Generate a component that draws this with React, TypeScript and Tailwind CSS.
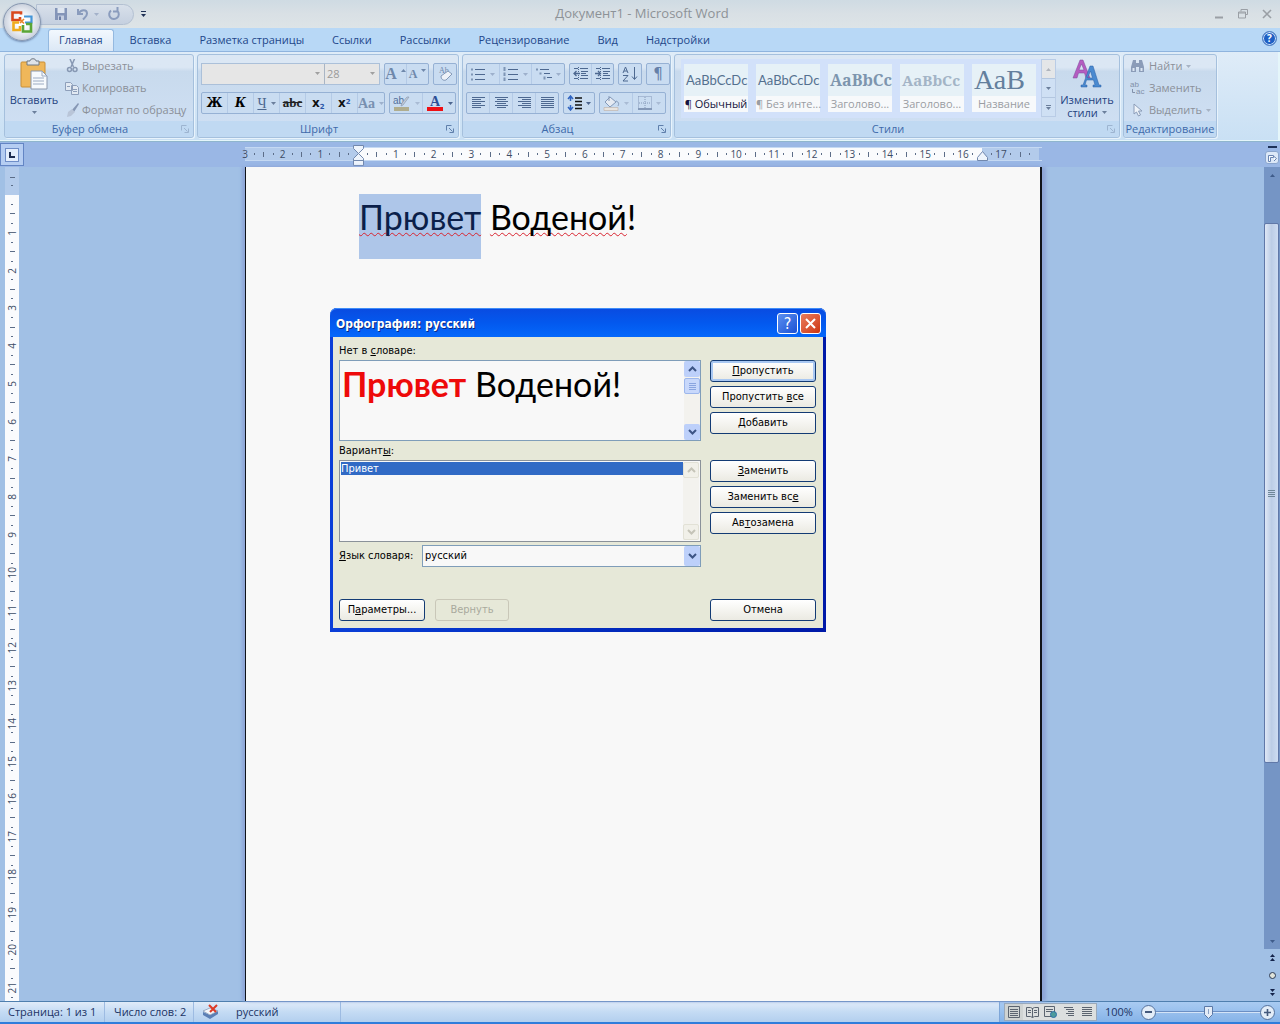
import type { ReactNode } from 'react';
import clsx from 'clsx';

const TABS = ['Главная', 'Вставка', 'Разметка страницы', 'Ссылки', 'Рассылки', 'Рецензирование', 'Вид', 'Надстройки'];

const STYLES = [
  { sample: 'AaBbCcDc', name: '¶ Обычный', cls: "font-['Lato',sans-serif] text-[13px] text-[#54708f]", active: true },
  { sample: 'AaBbCcDc', name: '¶ Без инте...', cls: "font-['Lato',sans-serif] text-[13px] text-[#54708f]" },
  { sample: 'AaBbCc', name: 'Заголово...', cls: "font-['Noto_Serif',serif] font-bold text-[16px] text-[#7d95ae]" },
  { sample: 'AaBbCc', name: 'Заголово...', cls: "font-['Noto_Serif',serif] font-bold text-[15px] text-[#a3b4c6]" },
  { sample: 'АаВ', name: 'Название', cls: "font-['Liberation_Serif',serif] text-[28px] text-[#637f9d]" },
];

/* ---------- small shared bits ---------- */

function Caret({ className = 'text-[#6b7f9c]' }: { className?: string }) {
  return (
    <svg viewBox="0 0 5 3" className={clsx('h-[3px] w-[5px] shrink-0', className)}>
      <path d="M0 0h5L2.500 3z" fill="currentColor" />
    </svg>
  );
}

function Chevron({ up, className }: { up?: boolean; className?: string }) {
  return (
    <svg viewBox="0 0 9 6" className={clsx('h-[6px] w-[9px]', className)}>
      <path d={up ? 'M1 5l3.5-3.5L8 5' : 'M1 1l3.5 3.5L8 1'} fill="none" stroke="currentColor" strokeWidth="2" />
    </svg>
  );
}

function Group({ title, launcher, muted, className, children }: { title: string; launcher?: boolean; muted?: boolean; className: string; children: ReactNode }) {
  return (
    <section className={clsx('flex shrink-0 flex-col rounded-[3px] border border-[#a5c0dd] bg-linear-to-b from-[#dbe7f4] from-15% via-[#c8daed] via-20% to-[#d0e0f4] shadow-[1px_1px_0_#e8f3fc]', className)}>
      <div className="flex min-h-0 flex-1">{children}</div>
      <div className={clsx('relative h-4 rounded-b-[3px] bg-[#c0d9f2] text-center text-[11px] leading-4 text-[#3e6aaa]', launcher && 'pr-[18px]')}>
        {title}
        {launcher && (
          <button aria-label={`${title}: параметры`} className={clsx('absolute right-1 top-1 h-2 w-2', muted ? 'text-[#9db4d0]' : 'text-[#5f7fab]')}>
            <svg viewBox="0 0 8 8" className="h-2 w-2" fill="none" stroke="currentColor">
              <path d="M.5 5.5v-5h5M3 3l3.5 3.5M7.5 3.5v4h-4" />
            </svg>
          </button>
        )}
      </div>
    </section>
  );
}

function Box({ className, children }: { className: string; children: ReactNode }) {
  return (
    <div className={clsx('flex h-[22px] items-stretch divide-x divide-[#b4cae6] rounded-[2px] border border-[#96b1d4] bg-[#c9dcf1] text-[#4d6890]', className)}>
      {children}
    </div>
  );
}

function Tool({ label, caret, caretClass, children }: { label: string; caret?: boolean; caretClass?: string; children: ReactNode }) {
  return (
    <button aria-label={label} className="flex flex-1 items-center justify-center gap-1">
      {children}
      {caret && <Caret className={caretClass} />}
    </button>
  );
}

function Lines({ rows }: { rows: [number, number][] }) {
  return (
    <svg viewBox="0 0 15 14" className="h-[14px] w-[15px]" stroke="currentColor" strokeWidth="1">
      {rows.map(([a, b], i) => <path key={i} d={`M${a} ${1.5 + i * 2}H${b}`} />)}
    </svg>
  );
}

function ListIcon({ kind }: { kind: 'dot' | 'num' | 'multi' }) {
  return (
    <svg viewBox="0 0 16 14" className="h-[14px] w-4" fill="none" stroke="currentColor">
      {kind === 'multi' ? (
        <>
          <path d="M4 2.500h9M8 6.500h6M11 10.500h5" />
          <path d="M1 1.500v2M4.500 5.500v2M8.500 9.500v3" strokeWidth="2" opacity=".6" />
        </>
      ) : (
        <>
          <path d="M5 2.500h10M5 7.500h10M5 12.500h10" />
          <path d={kind === 'dot' ? 'M1 2.500h2M1 7.500h2M1 12.500h2' : 'M1.500 0v4M1.500 5.500v3.500M1.500 10.500v3.500'} strokeWidth="2" opacity=".6" />
        </>
      )}
    </svg>
  );
}

function IndentIcon({ right }: { right?: boolean }) {
  return (
    <svg viewBox="0 0 16 14" className="h-[14px] w-4" fill="none" stroke="currentColor">
      <path d="M1 1.500h4M7 1.500h8M8 4.500h7M8 6.500h5M8 8.500h7M1 11.500h4M7 11.500h8" />
      <path d="M5.500 0v14" strokeDasharray="1 1" />
      <path d={right ? 'M0 6.500h5M3 4l2.500 2.500L3 9' : 'M1 6.500h6M3.500 4L1 6.500 3.500 9'} strokeWidth="1.300" />
    </svg>
  );
}

/* ---------- title bar ---------- */

function OfficeButton() {
  return (
    <button aria-label="Кнопка Office" className="absolute left-[3px] top-[3px] z-10 flex h-[38px] w-[38px] items-center justify-center rounded-full border border-[#8797b0] bg-radial from-white from-20% via-[#e3e7ee] to-[#a9b4c6] shadow-[0_1px_2px_#6d87ad]">
      <svg viewBox="0 0 24 24" className="h-6 w-6" fill="none" strokeWidth="2.600">
        <path d="M11 4.500V2.500H2.500V10H10V7" stroke="#d9481c" />
        <path d="M14 6.500h7.500v6H15" stroke="#4596d8" strokeWidth="2.200" />
        <path d="M9 12.500H3.500v7.500H10v-4" stroke="#efac1c" />
        <path d="M13 15v6.500h8V14h-5" stroke="#5aa636" />
        <path d="M10 9.500l4 4M14 9l-4 4" stroke="#e8842a" strokeWidth="1.600" />
      </svg>
    </button>
  );
}

function TitleBar() {
  return (
    <header className="flex h-7 items-center bg-linear-to-b from-[#cfdbe3] via-[#d9e0e5] to-[#dde4e7]">
      <div className="flex flex-1 items-center pl-3">
        <div className="ml-6 flex h-[21px] w-[98px] items-center gap-2 rounded-r-full border border-[#b3c0d2] bg-linear-to-b from-[#d8e0ea] to-[#c5d0e0] pl-[17px] text-[#8a9cbd]">
          <button aria-label="Сохранить">
            <svg viewBox="0 0 14 14" className="h-[14px] w-[14px]">
              <path d="M1 1h12v12H1z" fill="#8495b8" />
              <path d="M3.500 1h7v5h-7z" fill="#dfe6f0" />
              <path d="M4 8.500h6V13H4z" fill="#c3cde0" />
              <path d="M5 9.500h2V13H5z" fill="#6d7fa6" />
            </svg>
          </button>
          <button aria-label="Отменить" className="flex items-center gap-1">
            <svg viewBox="0 0 14 14" className="h-[14px] w-[14px]" fill="none" stroke="currentColor" strokeWidth="2">
              <path d="M2 2v5h5M2.500 6.500C5 2 11 2 11 6.500c0 3-2 4-4 6" />
            </svg>
            <Caret className="text-[#a3b1c9]" />
          </button>
          <button aria-label="Повторить">
            <svg viewBox="0 0 14 14" className="h-[14px] w-[14px]" fill="none" stroke="currentColor" strokeWidth="2">
              <path d="M4 3.500a4.800 4.800 0 1 0 6.500.5M10.500 0v4.500H6" />
            </svg>
          </button>
        </div>
        <button aria-label="Настройка панели быстрого доступа" className="ml-[7px] flex flex-col items-center gap-[2px] text-[#1f3055]">
          <span className="h-px w-[5px] bg-current" />
          <Caret className="text-[#1f3055]" />
        </button>
      </div>
      <h1 className="text-[13px] text-[#8d9297]">Документ1 - Microsoft Word</h1>
      <div className="flex flex-1 items-center justify-end gap-[14px] pr-2 text-[#9a9fa5]">
        <button aria-label="Свернуть"><svg viewBox="0 0 10 10" className="h-[10px] w-[10px]"><path d="M1 8.500h8" stroke="currentColor" strokeWidth="2" /></svg></button>
        <button aria-label="Развернуть">
          <svg viewBox="0 0 10 10" className="h-[10px] w-[10px]" fill="none" stroke="currentColor"><path d="M3 2.500v-2h6.500v5h-2M.5 3h7v6h-7zM.5 4h7" /></svg>
        </button>
        <button aria-label="Закрыть"><svg viewBox="0 0 10 10" className="h-[10px] w-[10px]"><path d="M1 1l8 8M9 1L1 9" stroke="currentColor" strokeWidth="1.600" /></svg></button>
      </div>
    </header>
  );
}

function TabRow() {
  return (
    <nav className="flex h-[23px] items-end gap-1 bg-[#b8d8f6] pl-12 pr-[3px] text-[11px] text-[#22478a]">
      {TABS.map((t, i) => (
        <button
          key={t}
          className={clsx('h-[22px]', i === 0 ? 'rounded-t-[3px] border border-b-0 border-[#94b9e0] bg-linear-to-b from-[#f2f8fe] to-[#dce8f5] px-[10px]' : 'px-3')}
        >
          {t}
        </button>
      ))}
      <button aria-label="Справка" className="mb-[5px] ml-auto flex h-[15px] w-[15px] items-center justify-center rounded-full border border-[#5583c4] bg-[#1f5fc4] text-[10px] font-bold text-white shadow-[inset_0_0_0_1px_#d4e5fa]">
        ?
      </button>
    </nav>
  );
}

/* ---------- ribbon ---------- */

function ClipboardGroup() {
  const row = 'flex h-[22px] items-center gap-[3px] whitespace-nowrap';
  return (
    <Group title="Буфер обмена" launcher muted className="w-[190px]">
      <button className="flex w-[58px] flex-col items-center pt-[3px] text-[11px] leading-4 text-[#1f4380]">
        <svg viewBox="0 0 30 32" className="mb-[2px] h-8 w-[30px]">
          <rect x="2" y="4" width="24" height="25" rx="1" fill="#efb75a" stroke="#c98f36" />
          <path d="M8 7V3h3c0-3 6-3 6 0h3v4z" fill="#dfe3e8" stroke="#6f7883" />
          <path d="M12 13h11l5 5v13H12z" fill="#f7fafd" stroke="#8b98ad" />
          <path d="M23 13v5h5M14 20h11M14 23h11M14 26h11" stroke="#9cabc2" fill="none" />
        </svg>
        Вставить
        <Caret className="mt-[3px] text-[#6b7f9c]" />
      </button>
      <div className="flex flex-col pl-[2px] text-[11px] text-[#8b9099]">
        <button className={row}>
          <svg viewBox="0 0 14 14" className="h-[14px] w-[14px]" fill="none" stroke="#8798b3" strokeWidth="1.500">
            <path d="M5 0l3.500 8M9.500 0L6 8" /><circle cx="4.500" cy="10.500" r="2" /><circle cx="10" cy="10.500" r="2" />
          </svg>
          Вырезать
        </button>
        <button className={row}>
          <svg viewBox="0 0 14 14" className="h-[14px] w-[14px]" fill="#e2e9f2" stroke="#8e9fba">
            <path d="M.5 1.500h5l2 2v6h-7zM6.500 4.500h5l2 2v7h-7z" /><path d="M2 5.500h3M8 8.500h4M8 10.500h4" />
          </svg>
          Копировать
        </button>
        <button className={row}>
          <svg viewBox="0 0 14 14" className="h-[14px] w-[14px]">
            <path d="M13 0l1 1-5 8-2-2z" fill="#8697b4" /><path d="M7 6l3 3-4 4-4 1 1-5z" fill="#b9c5d8" />
          </svg>
          Формат по образцу
        </button>
      </div>
    </Group>
  );
}

function FontGroup() {
  const combo = 'block h-full w-full appearance-none bg-[#e6e6e6] pl-[2px] text-[11px] leading-5 text-[#9a9a9a]';
  return (
    <Group title="Шрифт" launcher className="w-[262px]">
      <div className="flex flex-1 flex-col gap-[7px] pl-[3px] pt-2">
        <div className="flex gap-1">
          <div className="flex h-[22px] w-[179px] divide-x divide-[#a9b5c4] border border-[#abc0d9]">
            <label className="relative w-[123px]">
              <select aria-label="Шрифт" className={combo}><option></option></select>
              <Caret className="absolute right-1 top-2 text-[#a0a0a0]" />
            </label>
            <label className="relative flex-1">
              <select aria-label="Размер шрифта" className={combo}><option>28</option></select>
              <Caret className="absolute right-1 top-2 text-[#a0a0a0]" />
            </label>
          </div>
          <Box className="w-[45px] font-['Liberation_Serif',serif] font-bold text-[#6f88ab]">
            <Tool label="Увеличить размер"><span className="text-[16px] leading-4">A</span><Caret className="mb-2 rotate-180" /></Tool>
            <Tool label="Уменьшить размер"><span className="text-[12px] leading-4">A</span><Caret className="mb-2" /></Tool>
          </Box>
          <Box className="w-6">
            <Tool label="Очистить формат">
              <svg viewBox="0 0 18 18" className="h-[18px] w-[18px]">
                <text x="3" y="8" fontSize="8" fontFamily="Liberation Serif, serif" fill="#6f88ab">Аb</text>
                <path d="M5 11l7-5 4 3-6 6c-3 1-5-1-5-4z" fill="#eef2f8" stroke="#8399b8" />
              </svg>
            </Tool>
          </Box>
        </div>
        <div className="flex gap-1 font-['Liberation_Serif',serif]">
          <Box className="w-[184px] text-[14px]">
            <Tool label="Полужирный"><b className="font-['DejaVu_Serif',serif] text-[12px] text-black">Ж</b></Tool>
            <Tool label="Курсив"><b className="font-['DejaVu_Serif',serif] text-[12px] italic text-black">К</b></Tool>
            <Tool label="Подчеркнутый" caret><span className="text-[14px] underline">Ч</span></Tool>
            <Tool label="Зачеркнутый"><b className="text-[13px] text-[#222] line-through">abc</b></Tool>
            <Tool label="Подстрочный"><b className="font-['DejaVu_Sans',sans-serif] text-[12px] text-[#111]">x<sub className="text-[7px] text-[#2a56a8]">2</sub></b></Tool>
            <Tool label="Надстрочный"><b className="font-['DejaVu_Sans',sans-serif] text-[12px] text-[#111]">x<sup className="text-[7px] text-[#2a56a8]">2</sup></b></Tool>
            <Tool label="Регистр" caret caretClass="text-[#9db0cc]"><span className="font-bold text-[#7890b0]">Aa</span></Tool>
          </Box>
          <Box className="w-[67px]">
            <Tool label="Цвет выделения" caret caretClass="text-[#a9bbd4]">
              <svg viewBox="0 0 18 18" className="h-[18px] w-[18px]">
                <text x="0" y="10" fontSize="10" fontFamily="Liberation Sans, sans-serif" fill="#54719c">ab</text>
                <path d="M16 3l-6 8-2 1 1-3 5-6z" fill="#c3cbd6" stroke="#8b9bb2" strokeWidth=".7" />
                <path d="M1 13h15v4H1z" fill="#b0ad8e" />
              </svg>
            </Tool>
            <Tool label="Цвет текста" caret caretClass="text-[#4c658f]">
              <svg viewBox="0 0 18 18" className="h-[18px] w-[18px]">
                <text x="4" y="12" fontSize="14" fontWeight="bold" fontFamily="Liberation Serif, serif" fill="#2d4f96">A</text>
                <path d="M1 13h16v4H1z" fill="#ee0f14" />
              </svg>
            </Tool>
          </Box>
        </div>
      </div>
    </Group>
  );
}

function ParagraphGroup() {
  return (
    <Group title="Абзац" launcher className="w-[209px]">
      <div className="flex flex-1 flex-col gap-[7px] pl-[3px] pt-2">
        <div className="flex gap-1">
          <Box className="w-[99px]">
            <Tool label="Маркеры" caret caretClass="text-[#9db0cc]"><ListIcon kind="dot" /></Tool>
            <Tool label="Нумерация" caret caretClass="text-[#9db0cc]"><ListIcon kind="num" /></Tool>
            <Tool label="Многоуровневый список" caret caretClass="text-[#9db0cc]"><ListIcon kind="multi" /></Tool>
          </Box>
          <Box className="w-[45px]">
            <Tool label="Уменьшить отступ"><IndentIcon /></Tool>
            <Tool label="Увеличить отступ"><IndentIcon right /></Tool>
          </Box>
          <Box className="w-6">
            <Tool label="Сортировка">
              <svg viewBox="0 0 16 16" className="h-4 w-4" fill="none" stroke="currentColor">
                <path d="M1 7l2.500-6L6 7M2 5h3M1 9.500h5l-5 5.500h5M12.500 1v12M10 10.500l2.500 3 2.500-3" />
              </svg>
            </Tool>
          </Box>
          <Box className="w-6">
            <Tool label="Непечатаемые знаки"><span className="font-['DejaVu_Sans',sans-serif] text-[15px] text-[#6580a8]">¶</span></Tool>
          </Box>
        </div>
        <div className="flex gap-1">
          <Box className="w-[93px]">
            <Tool label="По левому краю"><Lines rows={[[1, 14], [1, 10], [1, 14], [1, 10], [1, 14], [1, 10]]} /></Tool>
            <Tool label="По центру"><Lines rows={[[1, 14], [3, 12], [1, 14], [3, 12], [1, 14], [3, 12]]} /></Tool>
            <Tool label="По правому краю"><Lines rows={[[1, 14], [5, 14], [1, 14], [5, 14], [1, 14], [5, 14]]} /></Tool>
            <Tool label="По ширине"><Lines rows={[[1, 14], [1, 14], [1, 14], [1, 14], [1, 14], [1, 14]]} /></Tool>
          </Box>
          <Box className="w-8">
            <Tool label="Междустрочный интервал" caret caretClass="text-[#4c658f]">
              <svg viewBox="0 0 15 16" className="h-4 w-[15px]" fill="none">
                <path d="M3.500 1v5M3.500 10v5M1 4l2.500-3L6 4M1 12l2.500 3L6 12" stroke="#2f63c0" strokeWidth="1.500" />
                <path d="M8 3h7M8 6.500h7M8 10h7M8 13.500h7" stroke="#111" strokeWidth="1.500" />
              </svg>
            </Tool>
          </Box>
          <Box className="w-[67px]">
            <Tool label="Заливка" caret caretClass="text-[#a9bbd4]">
              <svg viewBox="0 0 17 16" className="h-4 w-[17px]">
                <path d="M7 2l6 5-6 5-5-5z" fill="#e5eaf2" stroke="#8499b8" /><path d="M6 6V1M13 6c3 1 3 3 2 5" stroke="#8499b8" fill="none" />
                <path d="M1 12.500h14v3H1z" fill="#e8e4df" stroke="#c0b4ae" strokeWidth=".7" />
              </svg>
            </Tool>
            <Tool label="Границы" caret caretClass="text-[#a9bbd4]">
              <svg viewBox="0 0 14 14" className="h-[14px] w-[14px]" fill="none" stroke="#8499b8">
                <path d="M.5.5h13v13M.5.5v13M7 1v12M1 7h12" strokeDasharray="1 1" /><path d="M0 13h14" strokeWidth="2" />
              </svg>
            </Tool>
          </Box>
        </div>
      </div>
    </Group>
  );
}

function StylesGroup() {
  return (
    <Group title="Стили" launcher muted className="w-[446px]">
      <div className="ml-[6px] mt-1 flex h-[59px] w-[360px] gap-2 bg-[#d2e1fa] pl-[3px] pt-[5px]">
        {STYLES.map((s, i) => (
          <button key={i} className="flex h-12 w-16 shrink-0 flex-col bg-[#f7f9fb]">
            <span className={clsx('block h-8 w-full bg-[#e6f1f7] px-[2px] text-left leading-8 whitespace-nowrap', s.cls)}>{s.sample}</span>
            <span className={clsx('w-full text-center text-[11px] leading-4 whitespace-nowrap', s.active ? 'text-[#151540]' : 'text-[#9a9da3]')}>{s.name}</span>
          </button>
        ))}
      </div>
      <div className="mt-1 flex h-[58px] w-[15px] flex-col divide-y divide-[#b3c6df] border border-[#b9cce6] bg-[#cfe0f4]">
        <button aria-label="Вверх" className="flex flex-1 items-center justify-center bg-[#e4e6e8]"><Caret className="rotate-180 text-[#b0b5bd]" /></button>
        <button aria-label="Вниз" className="flex flex-1 items-center justify-center"><Caret /></button>
        <button aria-label="Дополнительно" className="flex flex-1 flex-col items-center justify-center gap-px"><span className="h-px w-[5px] bg-[#6b7f9c]" /><Caret /></button>
      </div>
      <button className="ml-[3px] mt-1 flex w-[56px] flex-col items-center text-[11px] leading-[13px] text-[#1f4380]">
        <svg viewBox="0 0 30 30" className="mb-1 h-[30px] w-[30px]">
          <path d="M1 19L8 1h3l7 18h-4l-1.500-5h-6L5 19zM7 11h5L9.500 5z" fill="#b45cc0" stroke="#7a4a9c" strokeWidth=".5" />
          <path d="M9 26h2l7-19h3l6 19h2v2h-8v-2h2l-1.500-5h-7L13 26h2v2H9zM15.500 19h5L18.500 12z" fill="#4a8ad0" stroke="#2a5ea4" strokeWidth=".5" />
        </svg>
        Изменить
        <span className="flex items-center gap-1">стили <Caret /></span>
      </button>
    </Group>
  );
}

function EditGroup() {
  const row = 'flex h-[22px] items-center gap-1 whitespace-nowrap';
  return (
    <Group title="Редактирование" className="w-[94px]">
      <div className="flex flex-col pl-[6px] text-[11px] text-[#8b9099]">
        <button className={row}>
          <svg viewBox="0 0 15 14" className="h-[14px] w-[15px]" fill="#8b9cb8">
            <path d="M3 1h3v3h3V1h3l2 7v5H9V8H6v5H1V8z" /><path d="M2.500 9h2v3h-2zM10.500 9h2v3h-2z" fill="#dbe5f1" />
          </svg>
          Найти <Caret className="text-[#a7b3c4]" />
        </button>
        <button className={row}>
          <svg viewBox="0 0 15 14" className="h-[14px] w-[15px]">
            <text x="0" y="6" fontSize="8" fontFamily="Liberation Sans, sans-serif" fill="#8291aa">ab</text>
            <text x="6" y="13" fontSize="8" fontFamily="Liberation Sans, sans-serif" fill="#8291aa">ac</text>
            <path d="M2.500 8v3.500H5" stroke="#8291aa" fill="none" />
          </svg>
          Заменить
        </button>
        <button className={row}>
          <svg viewBox="0 0 15 14" className="h-[14px] w-[15px]">
            <path d="M4 1v10l2.500-2 2 4 2-1-2-4H12z" fill="#eef3f9" stroke="#8b9cb8" />
          </svg>
          Выделить <Caret className="text-[#a7b3c4]" />
        </button>
      </div>
    </Group>
  );
}

function Ribbon() {
  return (
    <div className="flex h-[91px] gap-[3px] border-y border-[#8fb4de] border-b-[#8fb5cd] bg-linear-to-b from-[#dfecf8] to-[#c9e0f4] pl-1 pt-[2px] pb-[3px] shadow-[inset_-2px_-1px_0_#e5f6fa]">
      <ClipboardGroup />
      <FontGroup />
      <ParagraphGroup />
      <StylesGroup />
      <EditGroup />
    </div>
  );
}

/* ---------- rulers ---------- */

// four marks per centimetre: number, dot, dash, dot
function marks(from: number, count: number) {
  return Array.from({ length: count }, (_, i) => {
    const q = from + i;
    if (q === 0) return '';
    if (q % 4 === 0) return String(Math.abs(q / 4));
    return q % 2 === 0 ? '|' : '·';
  });
}

function Mark({ m }: { m: string }) {
  if (m === '|') return <span className="h-[5px] w-px shrink-0 bg-[#5c6d88]" />;
  if (m === '·') return <span className="h-[2px] w-px shrink-0 bg-[#5c6d88]" />;
  return <span>{m}</span>;
}

function HMarks({ from, count, className }: { from: number; count: number; className: string }) {
  return (
    <div className={clsx('flex h-3 items-center', className)}>
      {marks(from, count).map((m, i) => (
        <div key={i} className="flex h-3 flex-1 items-center">
          <div className="flex w-0 items-center justify-center"><Mark m={m} /></div>
        </div>
      ))}
    </div>
  );
}

function HRuler() {
  return (
    <div className="flex h-[25px] shrink-0 bg-[#9ab7e5]">
      <div className="flex w-[25px] items-center">
        <button aria-label="Тип табуляции" className="flex h-[23px] w-6 items-center justify-center border border-[#6385c4] bg-[#b5cdf2]">
          <span className="flex h-[14px] w-[14px] items-center justify-center border border-[#6f8ec8] bg-[#e3edfc]">
            <span className="h-[6px] w-[6px] border-b-2 border-l-2 border-[#1d2c50]" />
          </span>
        </button>
      </div>
      <div className="flex min-w-0 flex-1 justify-center pt-[5px] text-[10px] text-[#3d4d66]">
        <div className="relative flex h-[14px] w-[797px] shrink-0 border-y border-[#c5d9f3]">
          <HMarks from={-12} count={12} className="w-[113px] bg-[#b3cbeb]" />
          <HMarks from={0} count={66} className="w-[624px] bg-[#fafbfd]" />
          <HMarks from={66} count={6} className="w-[57px] bg-[#b3cbeb]" />
          <svg viewBox="0 0 11 22" className="absolute -top-[3px] left-[108px] h-[22px] w-[11px]" fill="#eef4fc" stroke="#7288ad">
            <path d="M.5.5h10v3l-5 5-5-5zM5.500 8.500l5 5v2H.5v-2zM.5 15.500h10v5H.5z" />
          </svg>
          <svg viewBox="0 0 11 10" className="absolute left-[732px] top-[3px] h-[10px] w-[11px]" fill="#eef4fc" stroke="#7288ad">
            <path d="M5.500.5l5 6v3H.5v-3z" />
          </svg>
        </div>
      </div>
      <div className="flex w-[18px] flex-col items-center gap-[3px] pl-[2px] pt-1">
        <span className="h-[2px] w-[9px] bg-[#1d3158]" />
        <button aria-label="Линейка" className="flex h-[13px] w-[14px] items-center justify-center rounded-[3px] border border-[#8aa5cd] bg-[#dce8f8]">
          <svg viewBox="0 0 9 9" className="h-[9px] w-[9px]" fill="#f8fbfe" stroke="#6a85b2"><path d="M.5 2.500h5v2h-3v4h-2zM6 3.500l2.500 2L6 8" /></svg>
        </button>
      </div>
    </div>
  );
}

function VMark({ m }: { m: string }) {
  if (m === '|') return <span className="h-px w-[5px] bg-[#5c6d88]" />;
  if (m === '·') return <span className="h-px w-[2px] bg-[#5c6d88]" />;
  return <span className="rotate-180 [writing-mode:vertical-rl]">{m}</span>;
}

function VRuler() {
  return (
    <div className="w-[25px] shrink-0 overflow-hidden pl-[5px] text-[10px] text-[#3d4d66]">
      <div className="flex h-[28px] w-[14px] flex-col items-center justify-center gap-[7px] bg-[#b3cbeb]">
        <VMark m="|" /><VMark m="·" />
      </div>
      <div className="flex h-[811px] w-[14px] flex-col bg-[#fafbfd]">
        {marks(0, 86).map((m, i) => (
          <div key={i} className="flex min-h-0 flex-1 flex-col">
            <div className="flex h-0 items-center justify-center"><VMark m={m} /></div>
          </div>
        ))}
      </div>
    </div>
  );
}

function DocScrollbar() {
  const arrow = 'flex h-4 shrink-0 items-center justify-center bg-[#7595c5]';
  return (
    <div className="flex w-[18px] shrink-0 flex-col pl-[2px]">
      <div className="flex min-h-0 flex-1 flex-col bg-[#7595c5]">
        <button aria-label="Прокрутка вверх" className={arrow}><Caret className="rotate-180 text-[#3f5c8a]" /></button>
        <div className="relative flex-1">
          <div className="absolute left-0 right-px top-10 flex h-[72%] items-center justify-center rounded-[2px] border border-[#6078a8] bg-linear-to-r from-[#dfe7f5] via-[#bccde6] to-[#cddcf2]">
            <div className="flex flex-col gap-px">
              {[0, 1, 2, 3].map(i => <span key={i} className="h-px w-[7px] bg-[#6f8798]" />)}
            </div>
          </div>
        </div>
        <button aria-label="Прокрутка вниз" className={arrow}><Caret className="text-[#3f5c8a]" /></button>
      </div>
      <div className="flex h-[52px] flex-col items-center justify-between py-[5px]">
        <button aria-label="Предыдущая страница" className="flex flex-col gap-px"><Caret className="rotate-180 text-[#14234a]" /><Caret className="rotate-180 text-[#14234a]" /></button>
        <button aria-label="Выбор объекта перехода" className="h-[7px] w-[7px] rounded-full border border-[#2c3a55] bg-[#dfe3da]" />
        <button aria-label="Следующая страница" className="flex flex-col gap-px"><Caret className="text-[#14234a]" /><Caret className="text-[#14234a]" /></button>
      </div>
    </div>
  );
}

/* ---------- spelling dialog ---------- */

function DlgButton({ disabled, focused, className, children }: { disabled?: boolean; focused?: boolean; className?: string; children: ReactNode }) {
  return (
    <button
      disabled={disabled}
      className={clsx(
        'h-[22px] rounded-[3px] border',
        disabled ? 'border-[#c9c7b8] text-[#a9aa9d]' : 'border-[#133b74] bg-linear-to-b from-white to-[#ebeae2]',
        focused && 'shadow-[inset_0_0_0_2px_#a9c8f2]',
        className,
      )}
    >
      {children}
    </button>
  );
}

function BoxScroll({ disabled }: { disabled?: boolean }) {
  const btn = clsx('flex h-4 w-full shrink-0 items-center justify-center rounded-[2px]', disabled ? 'border border-[#e2e1d6] bg-[#f1f0e9] text-[#c5c4b8]' : 'bg-[#bdd0fa] text-[#3d5585]');
  return (
    <div className="flex w-4 shrink-0 flex-col bg-[#f3f2ee]">
      <button aria-label="Вверх" className={btn}><Chevron up /></button>
      {!disabled && (
        <div className="mt-px flex h-4 flex-col items-center justify-center gap-px rounded-[2px] border border-[#9db7ec] bg-[#c8d8fb]">
          {[0, 1, 2, 3].map(i => <span key={i} className="h-px w-[7px] bg-[#8aa5e0]" />)}
        </div>
      )}
      <button aria-label="Вниз" className={clsx(btn, 'mt-auto')}><Chevron /></button>
    </div>
  );
}

function SpellingDialog() {
  return (
    <div role="dialog" aria-labelledby="dlg-title" className="absolute left-[84px] top-[141px] w-[496px] rounded-t-[7px] bg-linear-to-r from-[#0b3fd8] to-[#0019a8] px-[3px] pb-1 font-['DejaVu_Sans_Condensed','DejaVu_Sans',sans-serif] text-[11px] text-black">
      <div className="-mx-[3px] flex h-[29px] items-center gap-[2px] rounded-t-[7px] bg-linear-to-b from-[#0a4be0] via-[#0358ee] to-[#0568fb] pl-[6px] pr-[5px] pt-[2px] shadow-[inset_0_1px_0_#3f8cf8]">
        <h2 id="dlg-title" className="mr-auto text-[12px] font-bold text-white [text-shadow:1px_1px_0_#0b2a80]">Орфография: русский</h2>
        <button aria-label="Справка" className="flex h-[21px] w-[21px] items-center justify-center rounded-[3px] border border-white bg-linear-to-br from-[#5b8ff0] to-[#1c50d4] text-[16px] leading-none text-white">?</button>
        <button aria-label="Закрыть" className="flex h-[21px] w-[21px] items-center justify-center rounded-[3px] border border-white bg-linear-to-br from-[#ea7c5c] to-[#cc3208]">
          <svg viewBox="0 0 11 11" className="h-[11px] w-[11px]"><path d="M1 1l9 9M10 1l-9 9" stroke="#fff" strokeWidth="2" /></svg>
        </button>
      </div>
      <div className="bg-[#e6e8d8] pb-[7px] pl-[6px] pr-[7px] pt-[5px]">
        <div className="flex gap-[9px]">
          <div className="flex min-w-0 flex-1 flex-col">
            <span className="h-[18px] leading-[18px]">Нет в <u>с</u>ловаре:</span>
            <div className="flex h-[81px] border border-[#7f9db9] bg-[#f8f8f8]">
              <p className="flex-1 pl-[2px] pt-[2px] font-['Lato',sans-serif] text-[34px] leading-[42px]"><b className="text-[#ee0a0a]">Прювет</b> Воденой!</p>
              <BoxScroll />
            </div>
            <span className="h-[19px] leading-[19px]">Вариант<u>ы</u>:</span>
            <div className="flex h-[82px] border border-[#8a9199] bg-[#f8f8f8] p-px">
              <ul className="flex-1"><li className="h-[13px] bg-[#316ac5] leading-[13px] text-white">Привет</li></ul>
              <BoxScroll disabled />
            </div>
            <div className="mt-[3px] flex items-center">
              <label htmlFor="lang" className="w-[83px]"><u>Я</u>зык словаря:</label>
              <div className="relative flex-1">
                <select id="lang" className="block h-[22px] w-full appearance-none border border-[#7f9db9] bg-[#f8f8f8] pl-[2px]"><option>русский</option></select>
                <span className="pointer-events-none absolute right-px top-px flex h-5 w-4 items-center justify-center rounded-[2px] bg-[#bdd0fa] text-[#3d5585]"><Chevron /></span>
              </div>
            </div>
          </div>
          <div className="flex w-[106px] flex-col gap-1 pt-[18px]">
            <DlgButton focused><u>П</u>ропустить</DlgButton>
            <DlgButton>Пропустить <u>в</u>се</DlgButton>
            <DlgButton className="mb-[22px]"><u>Д</u>обавить</DlgButton>
            <DlgButton><u>З</u>аменить</DlgButton>
            <DlgButton>Заменить вс<u>е</u></DlgButton>
            <DlgButton>Ав<u>т</u>озамена</DlgButton>
          </div>
        </div>
        <div className="mt-8 flex gap-[10px]">
          <DlgButton className="w-[86px]">П<u>а</u>раметры...</DlgButton>
          <DlgButton disabled className="w-[74px]">Вернуть</DlgButton>
          <DlgButton className="ml-auto w-[106px]">Отмена</DlgButton>
        </div>
      </div>
    </div>
  );
}

/* ---------- status bar ---------- */

function StatusBar() {
  const cell = 'flex h-full items-center border-r border-[#9dbbe2]';
  const view = 'flex h-full flex-1 items-center justify-center';
  const round = 'flex h-[15px] w-[15px] shrink-0 items-center justify-center rounded-full border border-[#54719d] bg-[#e3edf8]';
  return (
    <footer className="flex h-[23px] shrink-0 items-center border-t border-b-2 border-t-[#4f7fae] border-b-[#2f7ddb] bg-linear-to-b from-[#e0ebf9] via-[#c4dbf4] to-[#b3cfee] text-[11px] text-[#1c3465]">
      <div className={clsx(cell, 'w-[105px] pl-2')}>Страница: 1 из 1</div>
      <div className={clsx(cell, 'w-[89px] pl-[9px]')}>Число слов: 2</div>
      <div className={clsx(cell, 'w-[147px] gap-4 pl-2')}>
        <svg viewBox="0 0 18 16" className="h-4 w-[18px]">
          <path d="M1 8l7 3 8-4v3l-8 5-7-4z" fill="#5b7fb5" /><path d="M1 7l7-3 8 3-8 4z" fill="#f4f7fb" stroke="#7e90ac" strokeWidth=".7" />
          <path d="M7 1l7 7M15 1L8 8" stroke="#dd3a26" strokeWidth="2" />
        </svg>
        русский
      </div>
      <div className="ml-auto flex h-full w-[281px] items-center gap-2 border-l border-[#7ea6d8] bg-linear-to-b from-[#a9cbf2] to-[#86b3e8] pl-1">
        <div className="flex h-[18px] w-[93px] items-center border border-[#9aa9ba] bg-[#dcdfdf] text-[#5b6470]">
          <button aria-label="Разметка страницы" className={clsx(view, 'bg-[#cfd3d2]')}><svg viewBox="0 0 12 12" className="h-3 w-3" fill="none" stroke="currentColor"><path d="M.5.500h11v11H.500zM2 3.500h8M2 5.500h8M2 7.500h8M2 9.500h8" /></svg></button>
          <button aria-label="Режим чтения" className={view}><svg viewBox="0 0 13 12" className="h-3 w-[13px]" fill="none" stroke="currentColor"><path d="M6.500 2v9.500M.5 1.500h4l2 1 2-1h4v9h-4l-2 1-2-1h-4zM2 4.500h3M2 6.500h3M8 4.500h3M8 6.500h3" /></svg></button>
          <button aria-label="Веб-документ" className={view}><svg viewBox="0 0 13 12" className="h-3 w-[13px]" fill="none" stroke="currentColor"><path d="M.5.5h10v10H.5zM2 3.500h7M2 5.500h6" /><circle cx="9.500" cy="8.500" r="3" fill="#4e9b9b" stroke="#2e6fa8" /></svg></button>
          <button aria-label="Структура" className={view}><svg viewBox="0 0 12 12" className="h-3 w-3" fill="none" stroke="currentColor"><path d="M1 1.500h9M3 3.500h8M5 5.500h6M3 7.500h8M5 9.500h6" /></svg></button>
          <button aria-label="Черновик" className={view}><svg viewBox="0 0 12 12" className="h-3 w-3" fill="none" stroke="currentColor"><path d="M1 1.500h10M1 3.500h10M1 5.500h10M1 7.500h10M1 9.500h10" /></svg></button>
        </div>
        <button className="w-[28px] text-left">100%</button>
        <div className="flex flex-1 items-center pr-[5px]">
          <button aria-label="Уменьшить" className={round}><span className="h-[2px] w-[7px] bg-[#44597c]" /></button>
          <label className="relative flex h-4 flex-1 items-center justify-center">
            <input type="range" aria-label="Масштаб" defaultValue={50} className="absolute inset-0 w-full opacity-0" />
            <span className="h-[2px] w-full border-t border-[#6b8fc4] bg-[#d4e4f7]" />
            <svg viewBox="0 0 9 13" className="absolute h-[13px] w-[9px]"><path d="M.5.5h8v8l-4 4-4-4z" fill="#e4ecf7" stroke="#5b78a6" /><path d="M4.500 3v5" stroke="#8ba2c4" /></svg>
          </label>
          <button aria-label="Увеличить" className={round}>
            <svg viewBox="0 0 9 9" className="h-[9px] w-[9px]"><path d="M1 4.500h7M4.500 1v7" stroke="#44597c" strokeWidth="1.600" /></svg>
          </button>
        </div>
      </div>
    </footer>
  );
}

export default function App() {
  const squiggle = 'underline decoration-[#d8232f] decoration-wavy decoration-1 underline-offset-2 [text-decoration-skip-ink:none]';
  return (
    <div className="relative flex h-screen flex-col overflow-hidden font-['Open_Sans','Noto_Sans',sans-serif] [&_button]:whitespace-nowrap">
      <OfficeButton />
      <TitleBar />
      <TabRow />
      <Ribbon />
      <HRuler />
      <div className="flex min-h-0 flex-1 bg-[#a1c0e5]">
        <VRuler />
        <main className="flex min-w-0 flex-1 justify-center">
          <div className="relative w-[797px] shrink-0 border-x border-r-2 border-[#10131a] bg-[#f8f8f8] pl-[113px] pt-[27px] shadow-[4px_0_3px_#8ea6d8,-3px_0_3px_#8ea6d8]">
            <p className="h-[65px] font-['Lato',sans-serif] text-[34px] leading-[46px] text-black">
              <span className="inline-block h-[65px] bg-[#aec6e9] text-[#0b1f4a]"><span className={squiggle}>Прювет</span></span>
              {' '}<span className={squiggle}>Воденой</span>!
            </p>
            <SpellingDialog />
          </div>
        </main>
        <DocScrollbar />
      </div>
      <StatusBar />
    </div>
  );
}
